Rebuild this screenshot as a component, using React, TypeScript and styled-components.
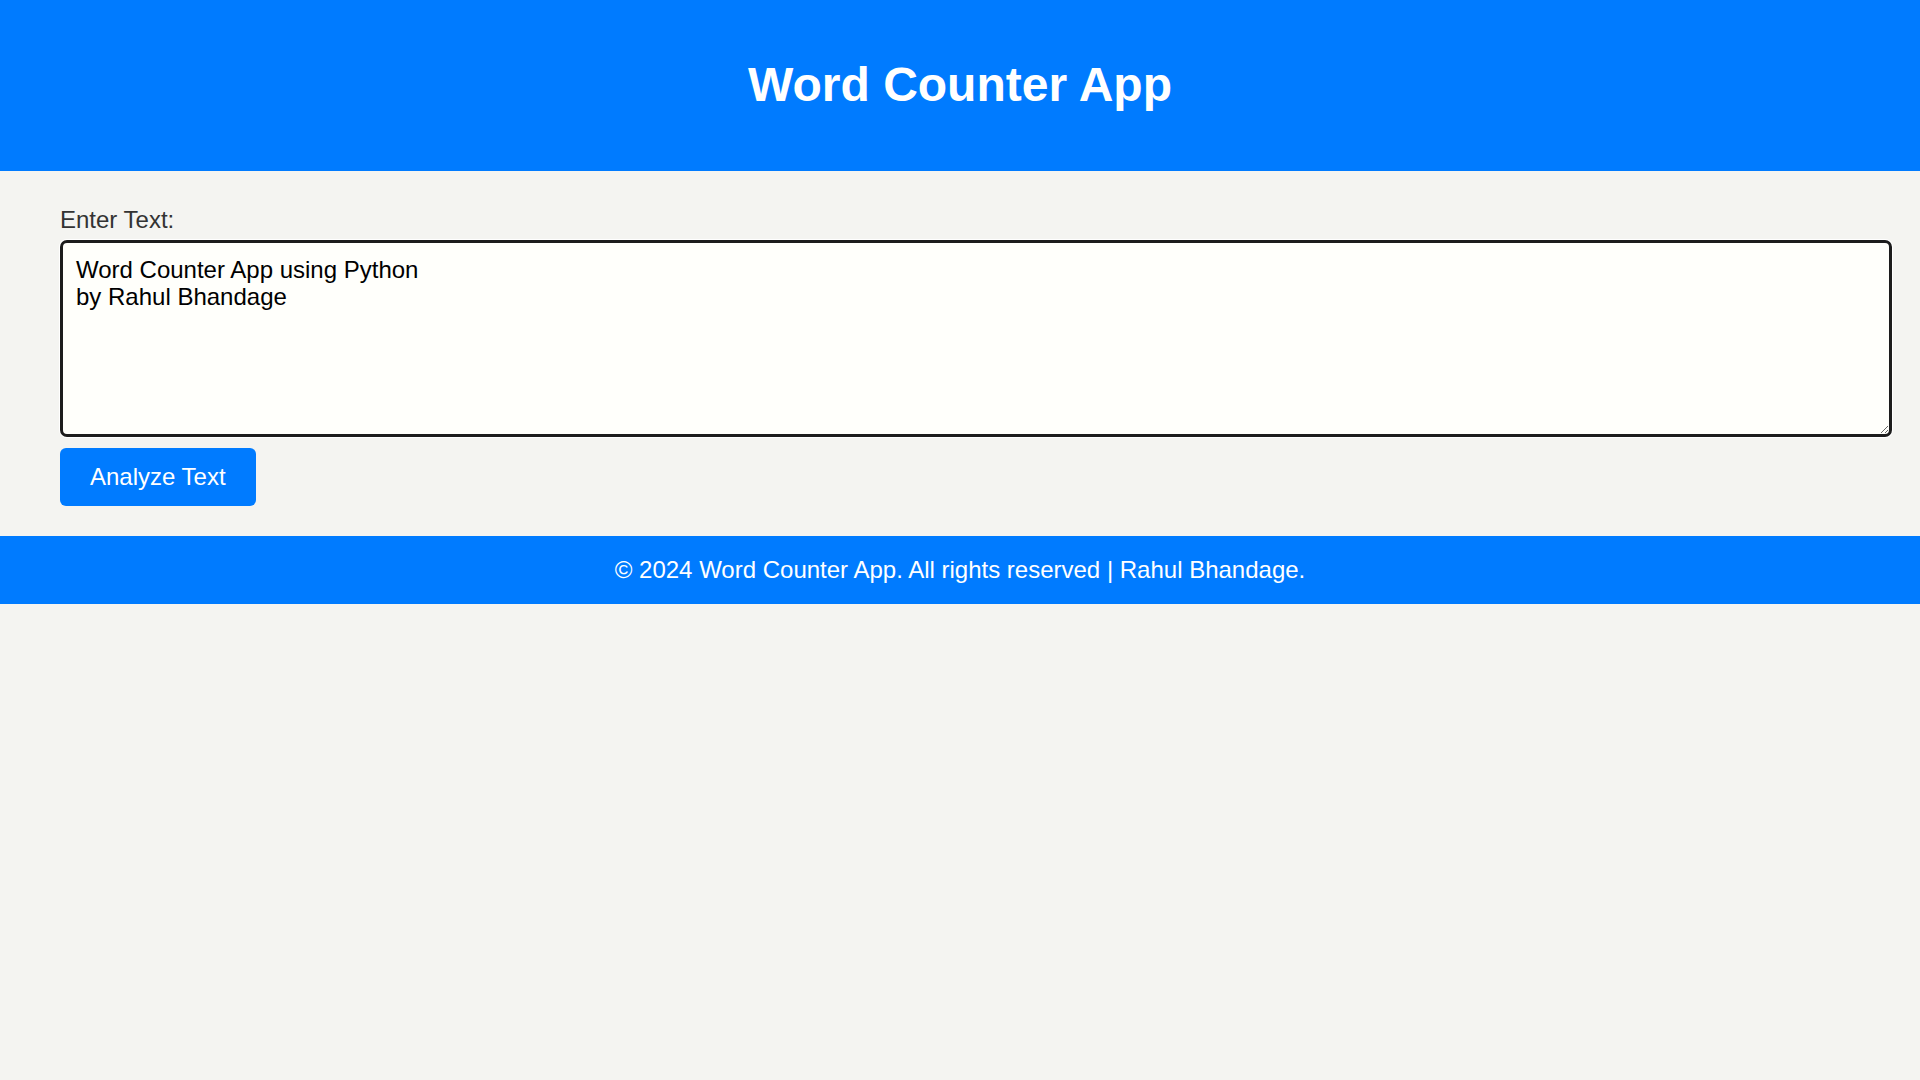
import React from "react";
import styled, { createGlobalStyle } from "styled-components";

const GlobalStyle = createGlobalStyle`
  html, body {
    margin: 0;
    padding: 0;
    background: #f4f4f1;
    font-family: "Liberation Sans", Arial, sans-serif;
    color: #333;
  }
`;

const Header = styled.header`
  background: #007bff;
  color: #fff;
  padding: 57px 0 58px;
  text-align: center;
`;

const Title = styled.h1`
  margin: 0;
  font-size: 48px;
  line-height: 56px;
  font-weight: 700;
`;

const Main = styled.main`
  padding: 35px 60px 30px;
`;

const Label = styled.label`
  display: block;
  font-size: 24px;
  line-height: 28px;
  color: #333;
  margin-bottom: 6px;
`;

const TextArea = styled.textarea`
  display: block;
  box-sizing: border-box;
  width: calc(100% + 32px);
  height: 197px;
  margin: 0 0 11px;
  padding: 13px;
  border: 3px solid #1c1c1c;
  border-radius: 7px;
  box-shadow: 0 0 0 1px #ffffff;
  background: #fffffb;
  color: #000;
  font-family: "Liberation Sans", Arial, sans-serif;
  font-size: 24px;
  line-height: 27px;
  outline: none;
  resize: both;
`;

const Button = styled.button`
  display: inline-block;
  padding: 15px 30px;
  border: none;
  border-radius: 6px;
  background: #007bff;
  color: #fff;
  font-family: "Liberation Sans", Arial, sans-serif;
  font-size: 24px;
  line-height: 28px;
  cursor: pointer;
`;

const Footer = styled.footer`
  background: #007bff;
  color: #fff;
  text-align: center;
  padding: 20px 0;
  font-size: 24px;
  line-height: 28px;
`;

export default function App() {
  return (
    <>
      <GlobalStyle />
      <Header>
        <Title>Word Counter App</Title>
      </Header>
      <Main>
        <Label htmlFor="text">Enter Text:</Label>
        <TextArea
          id="text"
          defaultValue={"Word Counter App using Python\nby Rahul Bhandage"}
        />
        <Button type="button">Analyze Text</Button>
      </Main>
      <Footer>© 2024 Word Counter App. All rights reserved | Rahul Bhandage.</Footer>
    </>
  );
}
